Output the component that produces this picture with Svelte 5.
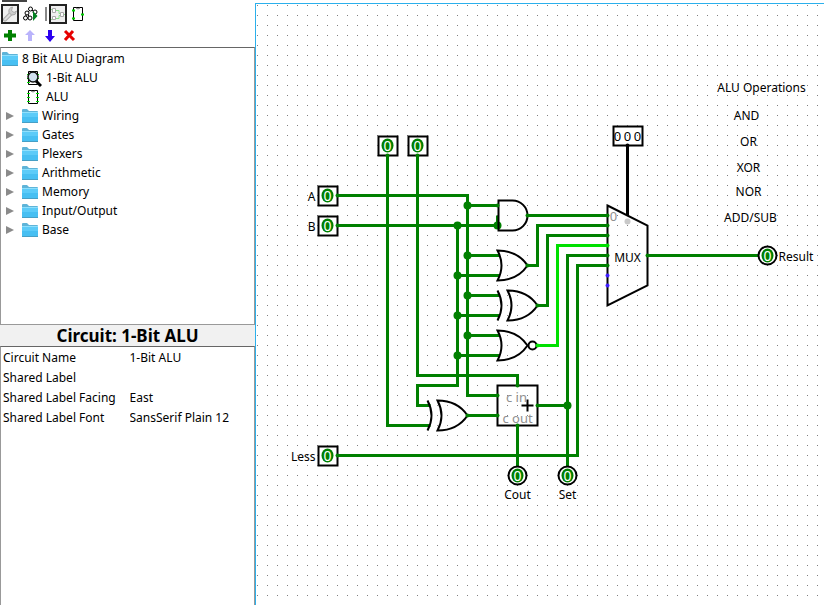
<script lang="ts">
  type Point = [number, number]

  const circuits = ['1-Bit ALU', 'ALU']
  const libraries = ['Wiring', 'Gates', 'Plexers', 'Arithmetic', 'Memory', 'Input/Output', 'Base']

  let selected = $state('1-Bit ALU')

  let attributes = $state([
    { id: 'name', label: 'Circuit Name', value: '1-Bit ALU' },
    { id: 'label', label: 'Shared Label', value: '' },
    { id: 'facing', label: 'Shared Label Facing', value: 'East' },
    { id: 'font', label: 'Shared Label Font', value: 'SansSerif Plain 12' },
  ])

  const wires = [
    '387,155 387,425 430,425',
    '417,155 417,375 517,375 517,385',
    '337,195 467,195 467,395 497,395',
    '467,205 497,205',
    '467,255 499,255',
    '467,295 499,295',
    '467,335 499,335',
    '337,225 497,225 497,215',
    '457,225 457,385 417,385 417,405 430,405',
    '457,275 499,275',
    '457,315 499,315',
    '457,355 499,355',
    '527,215 607,215',
    '527,265 537,265 537,225 607,225',
    '537,305 547,305 547,235 607,235',
    '537,405 567,405',
    '607,255 567,255 567,467',
    '337,455 577,455 577,265 607,265',
    '467,415 497,415',
    '517,425 517,467',
    '647,255 758,255',
  ]

  const junctions: Point[] = [
    [467, 205], [467, 255], [467, 295], [467, 335],
    [457, 225], [457, 275], [457, 315], [457, 355],
    [497, 225], [567, 405],
  ]

  const ports: Point[] = [
    [387, 155], [417, 155], [337, 195], [337, 225], [337, 455],
    [497, 205], [527, 215], [527, 265], [537, 305],
    [607, 215], [607, 225], [607, 235], [607, 255], [607, 265], [647, 255],
    [467, 415], [497, 395], [497, 415], [517, 385], [517, 425], [537, 405],
  ]

  const inputs: Point[] = [[387, 145], [417, 145], [327, 195], [327, 225], [327, 455]]
  const outputs: Point[] = [[517, 475], [567, 475], [767, 255]]

  const operations = [
    { text: 'ALU Operations', x: 761, y: 91 },
    { text: 'AND', x: 746, y: 119 },
    { text: 'OR', x: 748, y: 145 },
    { text: 'XOR', x: 748, y: 171 },
    { text: 'NOR', x: 748, y: 195 },
    { text: 'ADD/SUB', x: 750, y: 221 },
  ]
</script>

{#snippet folder()}
  <svg class="icon" width="18" height="16" viewBox="0 0 18 16" aria-hidden="true">
    <path d="M1 3V2q0-1 1-1h4l2 2h8q1 0 1 1v2H1z" fill="#5fb4d8" />
    <path d="M1 4h16v10H1z" fill="#5ccbf8" />
    <path d="M1 9h16v5H1z" fill="#47bff2" />
    <path d="M1 4.5h16" stroke="#8fe0fd" />
    <path d="M1 14.5h16" stroke="#479fc5" />
  </svg>
{/snippet}

{#snippet chip(current: boolean)}
  <svg class="icon" width="18" height="18" viewBox="0 0 18 18" aria-hidden="true">
    <path d="M4.500 2.500h9v13h-9z" fill="#fff" stroke="#000" />
    <path d="M7 3q2 2 4 0" fill="none" stroke="#777" />
    <path d="M3 5.500h3M3 9.500h3M3 13.500h3M12 5.500h3M12 9.500h3M12 13.500h3" stroke="#00e000" />
    {#if current}
      <path d="M12 12l5 5" stroke="#000" stroke-width="3" />
      <circle cx="9" cy="8" r="5" fill="#c6d8ec" fill-opacity=".8" stroke="#111" stroke-width="1.500" />
    {/if}
  </svg>
{/snippet}

{#snippet bit(x: number, y: number)}
  <ellipse cx={x} cy={y} rx="6" ry="7" fill="#008000" />
  <text class="bit" {x} y={y + 5}>0</text>
{/snippet}

<div class="app">
  <aside class="sidebar">
    <div class="toolbar">
      <span class="tab-edge"></span>
      <div class="tools">
        <button type="button" class="tool framed" aria-label="Toolbox">
          <svg width="14" height="16" viewBox="0 0 14 16">
            <path d="M2 13.500l6-6" stroke="#aaa" stroke-width="4" stroke-linecap="round" />
            <path d="M2 13.500l6-6" stroke="#ddd" stroke-width="2" stroke-linecap="round" />
            <path d="M9.500 1Q5 2 6 6.500 8 10.500 12 8.500L13.500 5 11 6.500 8.500 4.500Z" fill="#ccc" stroke="#aaa" />
          </svg>
        </button>
        <button type="button" class="tool simulate" aria-label="Simulation">
          <svg width="16" height="18" viewBox="0 0 16 18" fill="#fff" stroke="#000">
            <path d="M8 4L4 8M8 4l4 4M4 8l-2 5M4 8l3 5" />
            <circle cx="7.500" cy="4" r="2" />
            <circle cx="4" cy="8" r="2" />
            <circle cx="12" cy="7" r="2" />
            <circle cx="2.500" cy="13" r="2" />
            <circle cx="7" cy="13" r="2" />
            <path d="M10 6l4.500 5-4.500 5z" fill="#008020" stroke="none" />
          </svg>
        </button>
        <span class="divider"></span>
        <button type="button" class="tool framed" aria-label="Edit layout">
          <svg width="14" height="16" viewBox="0 0 14 16" fill="none">
            <path d="M5 4.500h3v3h2M5 12.500h3v-3h2M12 8.500h2M0 3.500h2M0 13.500h2" stroke="#88e088" />
            <path d="M1.500 2.500h3v4h-3zM1.500 10.500h3v3h-3zM9.500 6.500h3v4h-3z" fill="#fff" stroke="#aaa" />
          </svg>
        </button>
        <button type="button" class="tool" aria-label="Edit appearance">
          <svg width="14" height="16" viewBox="0 0 14 16">
            <path d="M2.500 1.500h9v13h-9z" fill="#fff" stroke="#000" />
            <path d="M5 2q2 2 4 0" fill="none" stroke="#777" />
            <path d="M1 4.500h3M1 12.500h3M10 8.500h3" stroke="#00d000" stroke-width="2" />
          </svg>
        </button>
      </div>
      <div class="edits">
        <button type="button" class="edit" aria-label="Add circuit">
          <svg width="14" height="14" viewBox="0 0 14 14"><path d="M7 2v11M1 7.500h12" stroke="#008000" stroke-width="4" /></svg>
        </button>
        <button type="button" class="edit" aria-label="Move up" disabled>
          <svg width="14" height="14" viewBox="0 0 14 14"><path d="M7 2l5 5H9v6H5V7H2z" fill="#b9b3fb" /></svg>
        </button>
        <button type="button" class="edit" aria-label="Move down">
          <svg width="14" height="14" viewBox="0 0 14 14"><path d="M7 14L2 8h3V2h4v6h3z" fill="#2a00f0" /></svg>
        </button>
        <button type="button" class="edit" aria-label="Remove circuit">
          <svg width="14" height="14" viewBox="0 0 14 14"><path d="M2 3l9 9M10 3l-8 9" stroke="#e60000" stroke-width="3" /></svg>
        </button>
      </div>
    </div>

    <nav class="tree" aria-label="Project">
      <div class="row root">{@render folder()}<span>8 Bit ALU Diagram</span></div>
      <ul>
        {#each circuits as circuit}
          <li>
            <button type="button" class="row circuit" onclick={() => (selected = circuit)}>
              {@render chip(circuit === selected)}<span>{circuit}</span>
            </button>
          </li>
        {/each}
        {#each libraries as library}
          <li>
            <button type="button" class="row library">
              <svg class="arrow" width="8" height="10" viewBox="0 0 8 10" aria-hidden="true"><path d="M0 1l8 4-8 4z" fill="#8a8a8a" /></svg>
              {@render folder()}<span>{library}</span>
            </button>
          </li>
        {/each}
      </ul>
    </nav>

    <h2 class="title">Circuit: {selected}</h2>

    <div class="attributes">
      <table>
        <tbody>
          {#each attributes as attribute}
            <tr>
              <th scope="row"><label for="attr-{attribute.id}">{attribute.label}</label></th>
              <td><input id="attr-{attribute.id}" type="text" bind:value={attribute.value} /></td>
            </tr>
          {/each}
        </tbody>
      </table>
    </div>
  </aside>

  <main class="canvas">
    <svg class="circuit-view" role="img" aria-label="1-Bit ALU circuit">
      <defs>
        <pattern id="grid" x="1" y="1" width="10" height="10" patternUnits="userSpaceOnUse">
          <rect width="1" height="1" fill="#808080" />
        </pattern>
      </defs>
      <rect width="100%" height="100%" fill="url(#grid)" />

      <!-- circuit coordinates are centred on the grid dots -->
      <g transform="translate(-255.500 -3.500)">
        <g class="wires">
          {#each wires as points}
            <polyline {points} />
          {/each}
          <polyline class="high" points="537,345 557,345 557,245 607,245" />
          <polyline class="bus" points="627,145 627,215" />
        </g>

        {#each junctions as [x, y]}
          <circle cx={x} cy={y} r="4" fill="#008000" />
        {/each}

        <g class="shapes">
          <path d="M498 200H512A15 15 0 0 1 512 230H498Z" />
          <path d="M497 250Q517 250 527 265Q517 280 497 280Q505 265 497 250Z" />
          <path d="M507 290Q527 290 537 305Q527 320 507 320Q515 305 507 290Z" />
          <path d="M497 290Q505 305 497 320" />
          <path d="M497 330Q517 330 527 345Q517 360 497 360Q505 345 497 330Z" />
          <circle cx="532" cy="345" r="4" />
          <path d="M437 400Q457 400 467 415Q457 430 437 430Q445 415 437 400Z" />
          <path d="M427 400Q435 415 427 430" />
          <path d="M607 205L647 225V285L607 305Z" />
          <rect x="497" y="385" width="40" height="40" />
          <path d="M521 405H533M527 399V411" />
          <rect x="613" y="126" width="29" height="19" />
          {#each inputs as [x, y]}
            <rect x={x - 9} y={y - 9} width="19" height="19" />
          {/each}
          {#each outputs as [x, y]}
            <circle cx={x} cy={y} r="9" class="output" />
          {/each}
        </g>

        {#each ports as [x, y]}
          <circle cx={x} cy={y} r="2" fill="#008000" />
        {/each}
        <circle cx="537" cy="345" r="2" fill="#00e000" />
        <circle cx="607" cy="245" r="2" fill="#00e000" />
        <circle cx="607" cy="275" r="2" fill="#4020ff" />
        <circle cx="607" cy="285" r="2" fill="#4020ff" />
        <circle cx="627" cy="145" r="2" />
        <circle cx="627" cy="221" r="3" fill="#c8c8c8" />

        {#each [...inputs, ...outputs] as [x, y]}
          {@render bit(x, y)}
        {/each}

        <text class="digit" x="617" y="140">0</text>
        <text class="digit" x="627" y="140">0</text>
        <text class="digit" x="637" y="140">0</text>
        <text class="digit muted" x="613" y="220">0</text>
        <text class="digit muted" x="516" y="401">c in</text>
        <text class="digit muted" x="517" y="422">c out</text>
        <text x="627" y="261">MUX</text>
        <text x="517" y="498">Cout</text>
        <text x="567" y="498">Set</text>
        <text class="before" x="315" y="200">A</text>
        <text class="before" x="315" y="230">B</text>
        <text class="before" x="315" y="460">Less</text>
        <text class="after" x="778" y="260">Result</text>
        {#each operations as { text, x, y }}
          <text {x} {y}>{text}</text>
        {/each}
      </g>
    </svg>
  </main>
</div>

<style>
  :global(body) {
    margin: 0;
    background: #fff;
  }

  .app {
    display: flex;
    min-height: 100vh;
    font: 12px/19px 'Noto Sans', 'Open Sans', sans-serif;
    color: #000;
  }

  .sidebar {
    display: flex;
    flex-direction: column;
    flex: 0 0 255px;
    box-sizing: border-box;
  }

  button {
    margin: 0;
    padding: 0;
    border: 0;
    background: none;
    font: inherit;
    color: inherit;
    text-align: left;
  }

  svg {
    display: block;
  }

  .toolbar {
    height: 47px;
  }

  .tab-edge {
    display: block;
    width: 25px;
    height: 2px;
    margin-left: 2px;
    background: #444;
  }

  .tools {
    display: flex;
    align-items: center;
    gap: 2px;
    padding: 2px 1px 0;
  }

  .tool {
    display: flex;
    align-items: center;
    justify-content: center;
    width: 18px;
    height: 20px;
    box-sizing: border-box;
  }

  .framed {
    border: 2px solid #222;
    background: #efefef;
  }

  .simulate {
    margin-left: 1px;
  }

  .divider {
    width: 2px;
    height: 14px;
    margin: 0 0 0 3px;
    background: #888;
  }

  .edits {
    display: flex;
    gap: 6px;
    padding: 4px 3px;
  }

  .tree {
    height: 278px;
    box-sizing: border-box;
    padding-top: 1px;
    border: 1px solid #999;
    border-top-color: #666;
  }

  ul {
    margin: 0;
    padding: 0;
    list-style: none;
  }

  .row {
    display: flex;
    align-items: center;
    width: 100%;
    height: 19px;
    white-space: nowrap;
  }

  .icon {
    flex: none;
  }

  .root {
    gap: 3px;
  }

  .circuit {
    gap: 4px;
    padding-left: 23px;
  }

  .library {
    gap: 3px;
    padding-left: 5px;
  }

  .arrow {
    margin-right: 4px;
  }

  .title {
    margin: 0;
    background: #f1f1f1;
    font-size: 17px;
    line-height: 21px;
    font-weight: 700;
    text-align: center;
  }

  .attributes {
    flex: 1;
    padding-top: 1px;
    border: 1px solid #999;
    border-top-color: #666;
    border-bottom: 0;
  }

  table {
    width: 100%;
    border-collapse: collapse;
    table-layout: fixed;
  }

  th,
  td {
    height: 20px;
    padding: 0 0 0 2px;
    font-weight: 400;
    text-align: left;
    line-height: 20px;
    white-space: nowrap;
  }

  input {
    display: block;
    width: 100%;
    height: 20px;
    box-sizing: border-box;
    padding: 0;
    border: 0;
    background: none;
    font: inherit;
    color: inherit;
  }

  .canvas {
    flex: 1;
    display: flex;
    min-width: 0;
    margin-top: 3px;
    border-top: 1px solid #2cb0ec;
    border-left: 1px solid #2cb0ec;
  }

  .circuit-view {
    flex: 1;
    min-width: 0;
  }

  .wires polyline {
    fill: none;
    stroke: #008000;
    stroke-width: 3;
  }

  .wires .high {
    stroke: #00e000;
  }

  .wires .bus {
    stroke: #000;
  }

  .shapes {
    fill: none;
    stroke: #000;
    stroke-width: 2;
  }

  .output {
    fill: #fff;
  }

  text {
    text-anchor: middle;
  }

  .before {
    text-anchor: end;
  }

  .after {
    text-anchor: start;
  }

  .digit {
    font-size: 13px;
  }

  .muted {
    fill: #909090;
  }

  .bit {
    fill: #fff;
    font-size: 14px;
  }
</style>
